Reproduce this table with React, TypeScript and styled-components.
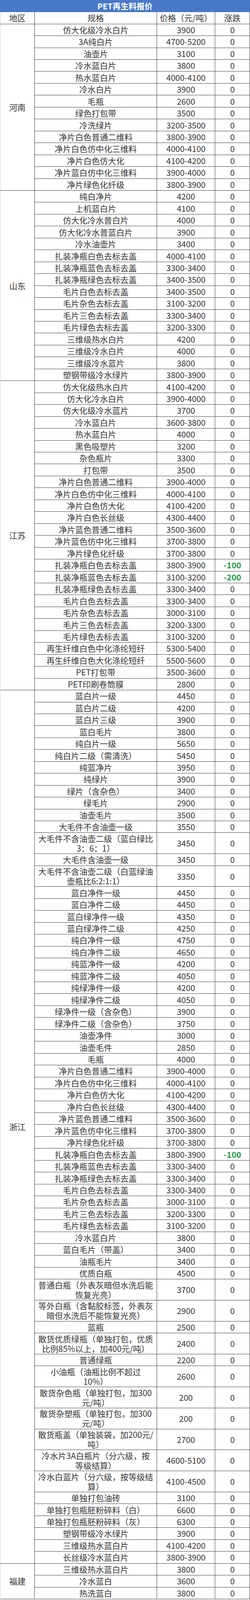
import React from 'react';
import styled, { createGlobalStyle } from 'styled-components';

const GlobalStyle = createGlobalStyle`
	* {
		box-sizing: border-box;
	}
	html, body {
		margin: 0;
		padding: 0;
		background: #fff;
		font-family: 'Noto Sans CJK SC', 'Noto Sans', sans-serif;
		color: #333;
	}
`;

// [规格, 价格, 涨跌]; "\n" marks where the cell wraps in the original sheet
type Row = [string, string, number?];

interface Group {
	region: string;
	rows: Row[];
}

const groups: Group[] = [
	{
		region: '河南',
		rows: [
			['仿大化级冷水白片', '3900'],
			['3A纯白片', '4700-5200'],
			['油壶片', '3100'],
			['冷水蓝白片', '3800'],
			['热水蓝白片', '4000-4100'],
			['冷水白片', '3900'],
			['毛瓶', '2600'],
			['绿色打包带', '3500'],
			['冷洗绿片', '3200-3500'],
			['净片白色普通二维料', '3800-3900'],
			['净片白色仿中化三维料', '4000-4100'],
			['净片白色仿大化', '4100-4200'],
			['净片蓝白仿中化三维料', '3900-4000'],
			['净片绿色化纤级', '3800-3900'],
		],
	},
	{
		region: '山东',
		rows: [
			['纯白净片', '4200'],
			['上机蓝白片', '4100'],
			['仿大化冷水普白片', '4000'],
			['仿大化冷水普蓝白片', '3900'],
			['冷水油壶片', '3400'],
			['扎装净瓶白色去标去盖', '4000-4100'],
			['扎装净瓶蓝色去标去盖', '3300-3400'],
			['扎装净瓶绿色去标去盖', '3400-3500'],
			['毛片白色去标去盖', '3400-3500'],
			['毛片杂色去标去盖', '3100-3200'],
			['毛片三色去标去盖', '3300-3400'],
			['毛片绿色去标去盖', '3200-3300'],
			['三维级热水白片', '4200'],
			['三维级冷水白片', '4000'],
			['三维级冷水蓝片', '3800'],
			['塑钢带级冷水绿片', '3800-3900'],
		],
	},
	{
		region: '江苏',
		rows: [
			['仿大化级热水白片', '4100-4200'],
			['仿大化冷水白片', '3900-4000'],
			['仿大化级冷水蓝片', '3700'],
			['冷水蓝白片', '3600-3800'],
			['热水蓝白片', '4000'],
			['黑色吸塑片', '3200'],
			['杂色瓶片', '3300'],
			['打包带', '3500'],
			['净片白色普通二维料', '3900-4000'],
			['净片白色仿中化三维料', '4000-4100'],
			['净片白色仿大化', '4100-4200'],
			['净片白色长丝级', '4300-4400'],
			['净片蓝色普通二维料', '3500-3600'],
			['净片蓝色仿中化三维料', '3700-3800'],
			['净片绿色化纤级', '3700-3800'],
			['扎装净瓶白色去标去盖', '3800-3900', -100],
			['扎装净瓶蓝色去标去盖', '3100-3200', -200],
			['扎装净瓶绿色去标去盖', '3300-3400'],
			['毛片白色去标去盖', '3300-3400'],
			['毛片杂色去标去盖', '3000-3100'],
			['毛片三色去标去盖', '3200-3300'],
			['毛片绿色去标去盖', '3100-3200'],
			['再生纤维白色中化涤纶短纤', '5300-5400'],
			['再生纤维白色大化涤纶短纤', '5500-5600'],
			['PET打包带', '3500-3600'],
			['PET印刷卷筒膜', '2800'],
		],
	},
	{
		region: '浙江',
		rows: [
			['蓝白片一级', '4450'],
			['蓝白片二级', '4200'],
			['蓝白片三级', '3900'],
			['蓝白毛片', '3800'],
			['纯白片一级', '5650'],
			['纯白片二级（需清洗）', '5450'],
			['纯蓝净片', '3950'],
			['纯绿片', '3900'],
			['绿片（含杂色）', '3400'],
			['绿毛片', '2900'],
			['油壶毛片', '3500'],
			['大毛件不含油壶一级', '3550'],
			['大毛件不含油壶二级（蓝白绿比\n3：6：1）', '3450'],
			['大毛件含油壶一级', '3450'],
			['大毛件不含油壶二级（白蓝绿油\n壶瓶比6:2:1:1）', '3350'],
			['蓝白净件一级', '4450'],
			['蓝白净件二级', '4450'],
			['蓝白绿净件一级', '4350'],
			['蓝白绿净件二级', '4250'],
			['纯白净件一级', '4750'],
			['纯白净件二级', '4650'],
			['纯蓝净件一级', '4200'],
			['纯蓝净件二级', '4050'],
			['纯绿净件一级', '4200'],
			['纯绿净件二级', '4050'],
			['绿净件一级（含杂色）', '3900'],
			['绿净件二级（含杂色）', '3750'],
			['油壶净件', '3000'],
			['油壶毛件', '2850'],
			['毛瓶', '4000'],
			['净片白色普通二维料', '3900-4000'],
			['净片白色仿中化三维料', '4000-4100'],
			['净片白色仿大化', '4100-4200'],
			['净片白色长丝级', '4300-4400'],
			['净片蓝色普通二维料', '3500-3600'],
			['净片蓝色仿中化三维料', '3700-3800'],
			['净片绿色化纤级', '3700-3800'],
			['扎装净瓶白色去标去盖', '3800-3900', -100],
			['扎装净瓶蓝色去标去盖', '3300-3400'],
			['扎装净瓶绿色去标去盖', '3300-3400'],
			['毛片白色去标去盖', '3300-3400'],
			['毛片杂色去标去盖', '3000-3100'],
			['毛片三色去标去盖', '3200-3300'],
			['毛片绿色去标去盖', '3100-3200'],
			['冷水蓝白片', '3800'],
			['蓝白毛片（带盖）', '3400'],
			['油瓶毛片', '3400'],
			['优质白瓶', '4500'],
			['普通白瓶（外表灰暗但水洗后能\n恢复光亮）', '3700'],
			['等外白瓶（含黏胶标签，外表灰\n暗但水洗后不能恢复光亮）', '2900'],
			['蓝瓶', '2500'],
			['散货优质绿瓶（单独打包，优质\n比例85%以上，加400元/吨）', '2400'],
			['普通绿瓶', '2200'],
			['小油瓶（油瓶比例不超过\n10%）', '2600'],
			['散货杂色瓶（单独打包，加300\n元/吨）', '200'],
			['散货杂塑瓶（单独打包，加300\n元/吨）', '200'],
			['散货瓶盖（单独装袋，加200元/\n吨）', '2700'],
			['冷水片3A白瓶片（分六级，按\n等级结算）', '4600-5100'],
			['冷水白蓝片（分六级，按等级结\n算）', '4100-4500'],
			['单独打包油砖', '3100'],
			['单独打包瓶胚粉碎料（白）', '6600'],
			['单独打包瓶胚粉碎料（灰）', '6300'],
			['塑钢带级冷水绿片', '3900'],
			['三维级热水蓝白片', '4100-4200'],
			['长丝级冷水蓝白片', '3800-3900'],
		],
	},
	{
		region: '福建',
		rows: [
			['三维级热水蓝白片', '3800'],
			['冷水蓝白', '3600'],
			['热洗蓝白', '3800'],
		],
	},
];

const FIT = 4096 / 4329;
const TITLE_H = 33 * FIT;
const ROW_H = 32.2 * FIT;
const TALL_ROW_H = 56.8 * FIT;
const LINE_H = 26.4 * FIT;

const rowHeight = (spec: string) => (spec.includes('\n') ? TALL_ROW_H : ROW_H);

// header row + every data row, as fixed tracks
const rowTracks = [ROW_H, ...groups.flatMap((g) => g.rows.map(([spec]) => rowHeight(spec)))]
	.map((h) => `${h.toFixed(3)}px`)
	.join(' ');

const Sheet = styled.div`
	width: 640px;
	overflow: hidden;
`;

const TitleBar = styled.div`
	height: ${TITLE_H.toFixed(3)}px;
	display: flex;
	align-items: center;
	justify-content: center;
	background: #4878c6;
	color: #fff;
	font-size: 20.5px;
	line-height: 1;
	font-weight: 700;
`;

const Grid = styled.div<{ $rows: string }>`
	display: grid;
	grid-template-columns: 88px 313px 149px 89px;
	grid-template-rows: ${(p) => p.$rows};
	border-left: 1px solid #cfcfcf;
`;

const Cell = styled.div<{ $col: number }>`
	grid-column: ${(p) => p.$col};
	min-height: 0;
	display: flex;
	align-items: center;
	justify-content: center;
	text-align: center;
	white-space: pre;
	font-size: 21px;
	line-height: ${LINE_H.toFixed(3)}px;
	color: #353535;
	border-right: 1px solid #3f3f3f;
	border-bottom: 1px solid #3f3f3f;
`;

const RegionCell = styled(Cell)<{ $span: number }>`
	grid-row: span ${(p) => p.$span};
`;

const ChangeCell = styled(Cell)<{ $down: boolean }>`
	color: ${(p) => (p.$down ? '#1e9c48' : '#353535')};
	font-weight: ${(p) => (p.$down ? 700 : 400)};
`;

export default function App() {
	return (
		<>
			<GlobalStyle />
			<Sheet>
				<TitleBar>PET再生料报价</TitleBar>
				<Grid $rows={rowTracks}>
					<Cell $col={1}>地区</Cell>
					<Cell $col={2}>规格</Cell>
					<Cell $col={3}>价格（元/吨）</Cell>
					<Cell $col={4}>涨跌</Cell>
					{groups.map((group) => (
						<React.Fragment key={group.region}>
							<RegionCell $col={1} $span={group.rows.length}>
								{group.region}
							</RegionCell>
							{group.rows.map(([spec, price, change = 0], i) => (
								<React.Fragment key={i}>
									<Cell $col={2}>{spec}</Cell>
									<Cell $col={3}>{price}</Cell>
									<ChangeCell $col={4} $down={change < 0}>
										{change}
									</ChangeCell>
								</React.Fragment>
							))}
						</React.Fragment>
					))}
				</Grid>
			</Sheet>
		</>
	);
}
